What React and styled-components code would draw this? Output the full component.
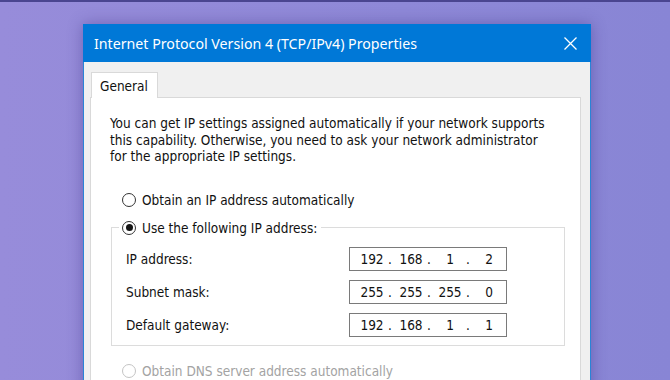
import React from 'react'
import styled, { createGlobalStyle } from 'styled-components'

const GlobalStyle = createGlobalStyle`
  html, body {
    margin: 0;
    padding: 0;
  }
  body {
    background: #9089d8;
    overflow: hidden;
  }
`

const BODY_FONT = `"DejaVu Sans Condensed", "DejaVu Sans", sans-serif`

const Page = styled.div`
  box-sizing: border-box;
  height: 380px;
  overflow: hidden;
  border-top: 2px solid #4a4590;
  padding: 22px 0 0 83px;
  background: linear-gradient(90deg, #978cda 0%, #8e88d7 60%, #8885d5 100%);
`

const Window = styled.div`
  box-sizing: border-box;
  width: 508px;
  height: 420px;
  background: #f0f0f0;
  border: 1px solid #2a84d6;
  border-top: none;
  box-shadow: 0 0 14px rgba(40, 30, 110, 0.35);
`

const TitleBar = styled.div`
  height: 38px;
  margin: 0 -1px;
  background: #0078d7;
  display: flex;
  align-items: center;
  justify-content: space-between;
  padding: 0 14px 0 11px;
  color: #fff;
  font-family: "Noto Sans", "Open Sans", sans-serif;
  font-size: 14.2px;
`

const CloseButton = styled.button`
  border: 0;
  padding: 0;
  background: transparent;
  display: flex;
  cursor: pointer;
`

const Body = styled.div`
  padding: 10px 9px 0 6px;
  font-family: ${BODY_FONT};
  font-size: 13.5px;
  color: #111;
`

const Tabs = styled.div`
  display: flex;
  padding-left: 1px;
`

const Tab = styled.div`
  position: relative;
  z-index: 1;
  box-sizing: border-box;
  width: 67px;
  height: 26px;
  margin-bottom: -1px;
  padding-left: 8px;
  display: flex;
  align-items: center;
  background: #fff;
  border: 1px solid #d9d9d9;
  border-bottom: none;
`

const Panel = styled.div`
  height: 400px;
  background: #fff;
  border: 1px solid #d9d9d9;
  padding: 17px 15px 0 19px;
`

const Paragraph = styled.p`
  margin: 0 0 25px;
  line-height: 16.5px;
  white-space: nowrap;
`

const RadioRow = styled.label`
  display: flex;
  align-items: center;
  gap: 6px;
  height: 20px;
  margin-left: ${p => p.$indent}px;
  color: ${p => (p.$disabled ? '#a3a3a3' : '#111')};
`

const RadioCircle = styled.span`
  box-sizing: border-box;
  width: 14px;
  height: 14px;
  border-radius: 50%;
  border: 1.3px solid ${p => (p.$disabled ? '#c4c4c4' : '#333')};
  background: #fff;
  display: grid;
  place-items: center;
  &::after {
    content: '';
    width: 7px;
    height: 7px;
    border-radius: 50%;
    background: ${p => (p.$checked ? '#151515' : 'transparent')};
  }
`

const Group = styled.fieldset`
  margin: 8px 0 0 1px;
  min-width: 0;
  border: 1px solid #dcdcdc;
  padding: 9px 0 8px 7px;
  display: flex;
  flex-direction: column;
  gap: 9px;
`

const Legend = styled.legend`
  padding: 0 4px 0 3px;
`

const FieldRow = styled.div`
  display: flex;
  align-items: center;
  height: 24px;
  padding-left: 7px;
`

const FieldLabel = styled.span`
  flex: 0 0 223px;
`

const IpBox = styled.div`
  box-sizing: border-box;
  width: 158px;
  height: 24px;
  border: 1px solid #7a7a7a;
  padding-left: 7px;
  display: flex;
  align-items: center;
  background: #fff;
`

const Octet = styled.span`
  width: 30px;
  text-align: center;
`

const Dot = styled.span`
  width: 8px;
  padding-left: 1px;
`

const DnsRow = styled.div`
  margin-top: 15px;
`

function Radio({ checked, disabled, indent = 0, children }) {
  return (
    <RadioRow $indent={indent} $disabled={disabled}>
      <RadioCircle $checked={checked} $disabled={disabled} />
      {children}
    </RadioRow>
  )
}

function IpField({ value }) {
  const parts = value.split('.')
  return (
    <IpBox>
      {parts.map((part, i) => (
        <React.Fragment key={i}>
          <Octet>{part}</Octet>
          {i < parts.length - 1 && <Dot>.</Dot>}
        </React.Fragment>
      ))}
    </IpBox>
  )
}

const fields = [
  { label: 'IP address:', value: '192.168.1.2' },
  { label: 'Subnet mask:', value: '255.255.255.0' },
  { label: 'Default gateway:', value: '192.168.1.1' },
]

export default function App() {
  return (
    <>
      <GlobalStyle />
      <Page>
        <Window>
          <TitleBar>
            <span>Internet Protocol Version 4 (TCP/IPv4) Properties</span>
            <CloseButton aria-label="Close">
              <svg width="13" height="13" viewBox="0 0 13 13">
                <path d="M0.5 0.5 L12.5 12.5 M12.5 0.5 L0.5 12.5" stroke="#fff" strokeWidth="1.3" fill="none" />
              </svg>
            </CloseButton>
          </TitleBar>
          <Body>
            <Tabs>
              <Tab>General</Tab>
            </Tabs>
            <Panel>
              <Paragraph>
                You can get IP settings assigned automatically if your network supports<br />
                this capability. Otherwise, you need to ask your network administrator<br />
                for the appropriate IP settings.
              </Paragraph>
              <Radio indent={12}>Obtain an IP address automatically</Radio>
              <Group>
                <Legend>
                  <Radio checked>Use the following IP address:</Radio>
                </Legend>
                {fields.map(f => (
                  <FieldRow key={f.label}>
                    <FieldLabel>{f.label}</FieldLabel>
                    <IpField value={f.value} />
                  </FieldRow>
                ))}
              </Group>
              <DnsRow>
                <Radio indent={12} disabled>Obtain DNS server address automatically</Radio>
              </DnsRow>
            </Panel>
          </Body>
        </Window>
      </Page>
    </>
  )
}
